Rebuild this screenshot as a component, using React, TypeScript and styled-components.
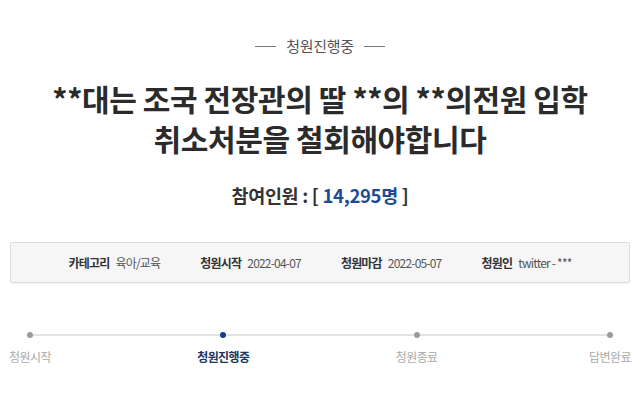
import React from 'react';
import styled, { createGlobalStyle } from 'styled-components';

const GlobalStyle = createGlobalStyle`
  html, body {
    margin: 0;
    padding: 0;
    background: #fff;
  }
  body {
    font-family: 'Noto Sans CJK KR', 'Noto Sans', sans-serif;
    color: #333;
  }
`;

const steps = [
  { label: '청원시작', active: false },
  { label: '청원진행중', active: true },
  { label: '청원종료', active: false },
  { label: '답변완료', active: false },
];

const info = [
  { label: '카테고리', value: '육아/교육' },
  { label: '청원시작', value: '2022-04-07' },
  { label: '청원마감', value: '2022-05-07' },
  { label: '청원인', value: 'twitter - ***' },
];

const App = (): JSX.Element => (
  <>
    <GlobalStyle />
    <StyledPage>
      <StyledStatus>청원진행중</StyledStatus>
      <StyledTitle>
        **대는 조국 전장관의 딸 **의 **의전원 입학
        <br />
        취소처분을 철회해야합니다
      </StyledTitle>
      <StyledCount>
        참여인원 : [ <StyledNumber>14,295명</StyledNumber> ]
      </StyledCount>
      <StyledInfoBox>
        {info.map((item) => (
          <StyledInfoItem key={item.label}>
            <StyledInfoLabel>{item.label}</StyledInfoLabel>
            <StyledInfoValue>{item.value}</StyledInfoValue>
          </StyledInfoItem>
        ))}
      </StyledInfoBox>
      <StyledTimeline>
        {steps.map((step) => (
          <StyledStep key={step.label}>
            <StyledDot active={step.active} />
            <StyledStepLabel active={step.active}>{step.label}</StyledStepLabel>
          </StyledStep>
        ))}
      </StyledTimeline>
    </StyledPage>
  </>
);

export default App;

const StyledPage = styled.div`
  width: 640px;
  height: 416px;
  overflow: hidden;
  padding-top: 36px;
  box-sizing: border-box;
`;

const StyledStatus = styled.div`
  display: flex;
  align-items: center;
  justify-content: center;
  gap: 10px;
  font-size: 15px;
  line-height: 20px;
  color: #555;
  letter-spacing: -0.3px;

  &::before,
  &::after {
    content: '';
    width: 21px;
    height: 1px;
    background: #777;
  }
`;

const StyledTitle = styled.h1`
  margin: 22px 0 0;
  text-align: center;
  font-size: 30px;
  line-height: 40px;
  font-weight: 700;
  color: #2b2b2b;
  letter-spacing: -0.4px;
`;

const StyledCount = styled.div`
  margin-top: 25px;
  text-align: center;
  font-size: 18.5px;
  line-height: 24px;
  font-weight: 700;
  color: #333;
  letter-spacing: -0.3px;
`;

const StyledNumber = styled.span`
  color: #1d4c97;
`;

const StyledInfoBox = styled.div`
  margin: 35px 10px 0;
  height: 41px;
  box-sizing: border-box;
  display: flex;
  align-items: center;
  justify-content: center;
  gap: 40px;
  background: #f6f6f6;
  border: 1px solid #dcdcdc;
  border-radius: 2px;
  box-shadow: 0 1px 1px rgba(0, 0, 0, 0.04);
`;

const StyledInfoItem = styled.div`
  display: flex;
  align-items: center;
  gap: 6px;
  font-size: 12px;
  letter-spacing: -0.8px;
`;

const StyledInfoLabel = styled.span`
  font-weight: 700;
  color: #333;
`;

const StyledInfoValue = styled.span`
  color: #555;
`;

const StyledTimeline = styled.div`
  position: relative;
  margin-top: 49px;
  display: flex;
  justify-content: space-between;

  &::before {
    content: '';
    position: absolute;
    left: 30px;
    right: 30px;
    top: 2px;
    height: 2px;
    background: #e2e2e2;
  }
`;

const StyledStep = styled.div`
  width: 60px;
  display: flex;
  flex-direction: column;
  align-items: center;
  gap: 11px;
  position: relative;
`;

const StyledDot = styled.span<{ active: boolean }>`
  width: 6px;
  height: 6px;
  border-radius: 50%;
  background: ${(props) => (props.active ? '#103f8c' : '#9a9a9a')};
`;

const StyledStepLabel = styled.span<{ active: boolean }>`
  font-size: 12px;
  line-height: 16px;
  white-space: nowrap;
  letter-spacing: -0.6px;
  font-weight: ${(props) => (props.active ? 700 : 400)};
  color: ${(props) => (props.active ? '#1e3560' : '#aaa')};
`;
